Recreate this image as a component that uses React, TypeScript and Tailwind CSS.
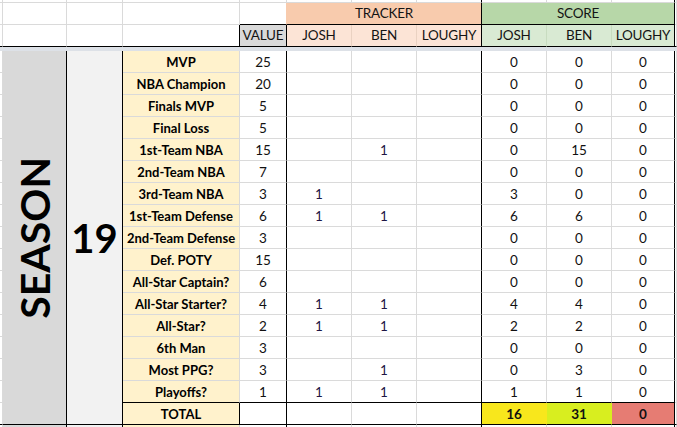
import React from "react";

const RG = "border-r-[#dadada]";
const RK = "border-r-black";
const BG = "border-b-[#dadada]";
const BK = "border-b-black";

function Cell({
  r = RG,
  b = BG,
  className = "",
  children,
}: {
  r?: string;
  b?: string;
  className?: string;
  children?: React.ReactNode;
}) {
  return (
    <div
      className={`border-r border-b ${r} ${b} flex items-center justify-center overflow-hidden whitespace-nowrap ${className}`}
    >
      {children}
    </div>
  );
}

type Row = [string, number, string, string, string, number, number, number];

const rows: Row[] = [
  ["MVP", 25, "", "", "", 0, 0, 0],
  ["NBA Champion", 20, "", "", "", 0, 0, 0],
  ["Finals MVP", 5, "", "", "", 0, 0, 0],
  ["Final Loss", 5, "", "", "", 0, 0, 0],
  ["1st-Team NBA", 15, "", "1", "", 0, 15, 0],
  ["2nd-Team NBA", 7, "", "", "", 0, 0, 0],
  ["3rd-Team NBA", 3, "1", "", "", 3, 0, 0],
  ["1st-Team Defense", 6, "1", "1", "", 6, 6, 0],
  ["2nd-Team Defense", 3, "", "", "", 0, 0, 0],
  ["Def. POTY", 15, "", "", "", 0, 0, 0],
  ["All-Star Captain?", 6, "", "", "", 0, 0, 0],
  ["All-Star Starter?", 4, "1", "1", "", 4, 4, 0],
  ["All-Star?", 2, "1", "1", "", 2, 2, 0],
  ["6th Man", 3, "", "", "", 0, 0, 0],
  ["Most PPG?", 3, "", "1", "", 0, 3, 0],
  ["Playoffs?", 1, "1", "1", "", 1, 1, 0],
];

const H = "text-[13.5px] tracking-[-0.2px] text-[#141414] pt-px";
const D = "pt-[2px]";

export default function App() {
  const cells: React.ReactNode[] = [];
  let k = 0;
  const key = () => `c${k++}`;

  // top strip (3px)
  const topR = [RG, RG, RG, RG, RG, RG, RG, RK, RG, RG, RK, RG];
  topR.forEach((r) => cells.push(<Cell key={key()} r={r} />));

  // header row 1
  cells.push(<Cell key={key()} />);
  cells.push(<Cell key={key()} />);
  cells.push(<Cell key={key()} />);
  cells.push(<Cell key={key()} />);
  cells.push(<Cell key={key()} b={BK} r="border-r-[#f8cbad]" />);
  cells.push(
    <Cell key={key()} r={RK} b={BK} className={`col-span-3 bg-[#f8cbad] ${H}`}>
      TRACKER
    </Cell>
  );
  cells.push(
    <Cell key={key()} r={RK} b={BK} className={`col-span-3 bg-[#b7d7a8] ${H}`}>
      SCORE
    </Cell>
  );
  cells.push(<Cell key={key()} />);

  // header row 2
  cells.push(<Cell key={key()} b={BK} />);
  cells.push(<Cell key={key()} b={BK} />);
  cells.push(<Cell key={key()} b={BK} />);
  cells.push(<Cell key={key()} b={BK} r={RK} />);
  cells.push(
    <Cell key={key()} r={RK} b={BK} className={`bg-[#d9d9d9] ${H}`}>
      VALUE
    </Cell>
  );
  cells.push(
    <Cell key={key()} r="border-r-[#ead2c2]" b={BK} className={`bg-[#fce4d6] ${H}`}>
      JOSH
    </Cell>
  );
  cells.push(
    <Cell key={key()} r="border-r-[#ead2c2]" b={BK} className={`bg-[#fce4d6] ${H}`}>
      BEN
    </Cell>
  );
  cells.push(
    <Cell key={key()} r={RK} b={BK} className={`bg-[#fce4d6] ${H}`}>
      LOUGHY
    </Cell>
  );
  cells.push(
    <Cell key={key()} r="border-r-[#c8dcc0]" b={BK} className={`bg-[#d9ead3] ${H}`}>
      JOSH
    </Cell>
  );
  cells.push(
    <Cell key={key()} r="border-r-[#c8dcc0]" b={BK} className={`bg-[#d9ead3] ${H}`}>
      BEN
    </Cell>
  );
  cells.push(
    <Cell key={key()} r={RK} b={BK} className={`bg-[#d9ead3] ${H}`}>
      LOUGHY
    </Cell>
  );
  cells.push(<Cell key={key()} b={BK} />);

  // band
  cells.push(<div key={key()} className="col-span-12 bg-[#dde1e7]" />);

  // data rows
  const all = [...rows.map((r) => ({ r, total: false })), { r: null as Row | null, total: true }];
  all.forEach(({ r, total }, i) => {
    const last = i === 16;
    const bb = i >= 15 ? BK : BG;
    cells.push(<Cell key={key()} b={last ? BK : BG} />);
    if (i === 0) {
      cells.push(
        <div
          key={key()}
          className="row-span-17 bg-[#d9d9d9] border-r border-b border-r-black border-b-black flex items-center justify-center"
        >
          <span className="[writing-mode:vertical-rl] rotate-180 font-bold text-[41px] leading-none text-black">
            SEASON
          </span>
        </div>
      );
      cells.push(
        <div
          key={key()}
          className="row-span-17 bg-[#f2f2f2] border-r border-b border-r-black border-b-black flex items-center justify-center"
        >
          <span className="font-bold text-[40px] leading-none text-black">19</span>
        </div>
      );
    }
    cells.push(
      <Cell
        key={key()}
        r={last ? RK : RG}
        b={bb}
        className={`bg-[#fff2cc] font-bold text-[13px] text-black ${D}`}
      >
        {total ? "TOTAL" : r![0]}
      </Cell>
    );
    cells.push(
      <Cell key={key()} r={RK} b={bb} className={D}>
        {total ? "" : r![1]}
      </Cell>
    );
    cells.push(<Cell key={key()} b={bb} className={`text-[#1e1644] ${D}`}>{total ? "" : r![2]}</Cell>);
    cells.push(<Cell key={key()} b={bb} className={`text-[#1e1644] ${D}`}>{total ? "" : r![3]}</Cell>);
    cells.push(<Cell key={key()} r={RK} b={bb} className={D}>{total ? "" : r![4]}</Cell>);
    if (total) {
      cells.push(
        <Cell key={key()} r="border-r-[#f8e71c]" b={BK} className={`bg-[#f8e71c] font-bold ${D}`}>
          16
        </Cell>
      );
      cells.push(
        <Cell key={key()} r="border-r-[#d8ee1f]" b={BK} className={`bg-[#d8ee1f] font-bold ${D}`}>
          31
        </Cell>
      );
      cells.push(
        <Cell key={key()} r={RK} b={BK} className={`bg-[#e67c73] font-bold ${D}`}>
          0
        </Cell>
      );
    } else {
      cells.push(<Cell key={key()} b={bb} className={D}>{r![5]}</Cell>);
      cells.push(<Cell key={key()} b={bb} className={D}>{r![6]}</Cell>);
      cells.push(<Cell key={key()} r={RK} b={bb} className={D}>{r![7]}</Cell>);
    }
    cells.push(<Cell key={key()} b={last ? BK : BG} />);
  });

  // bottom strip
  const botR = [RG, RK, RK, RG, RK, RG, RG, RK, RG, RG, RK, RG];
  const botBg = ["", "bg-[#d9d9d9]", "bg-[#f2f2f2]", "bg-[#fff2cc]", "", "", "", "", "", "", "", ""];
  botR.forEach((r, i) =>
    cells.push(<Cell key={key()} r={r} b="border-b-transparent" className={botBg[i]} />)
  );

  return (
    <div
      className="w-[677px] h-[427px] overflow-hidden bg-white text-[13.5px] text-[#111] leading-none"
      style={{ fontFamily: "Lato, 'Open Sans', sans-serif" }}
    >
      <div className="grid grid-cols-[3px_64px_56px_117px_47px_65px_65px_65px_65px_65px_63px_2px] grid-rows-[3px_22px_22px_4px_repeat(17,22px)_3px]">
        {cells}
      </div>
    </div>
  );
}
